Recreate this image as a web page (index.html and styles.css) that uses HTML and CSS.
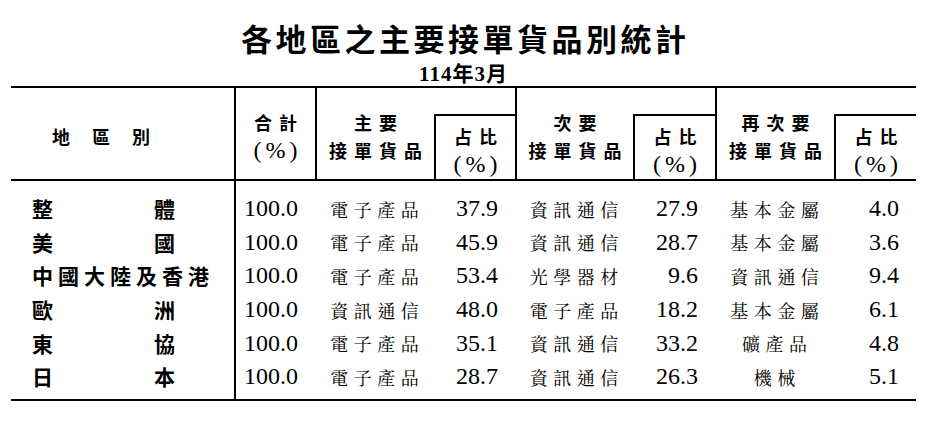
FILE: index.html
```html
<!DOCTYPE html>
<html lang="zh-Hant">
<head>
<meta charset="utf-8">
<title>各地區之主要接單貨品別統計</title>
<link rel="stylesheet" href="styles.css">
</head>
<body>
<div class="report">
  <h1 class="title"><span class="ls">各地區之主要接單貨品別統計</span></h1>
  <div class="period">114年3月</div>
  <div class="table">
    <div class="thead">
      <div class="h h-region">地區別</div>
      <div class="h h-total line"><span class="ls">合計</span><span class="pc">(%)</span></div>
      <div class="h h-main line"><span class="ls">主要</span><span class="ls">接單貨品</span></div>
      <div class="h h-pct1 line top"><span class="ls">占比</span><span class="pc">(%)</span></div>
      <div class="h h-second line"><span class="ls">次要</span><span class="ls">接單貨品</span></div>
      <div class="h h-pct2 line top"><span class="ls">占比</span><span class="pc">(%)</span></div>
      <div class="h h-third line"><span class="ls">再次要</span><span class="ls">接單貨品</span></div>
      <div class="h h-pct3 line top"><span class="ls">占比</span><span class="pc">(%)</span></div>
    </div>
    <div class="tbody">
      <div class="regions">
        <div class="region pair"><span>整</span><span>體</span></div>
        <div class="region pair"><span>美</span><span>國</span></div>
        <div class="region long">中國大陸及香港</div>
        <div class="region pair"><span>歐</span><span>洲</span></div>
        <div class="region pair"><span>東</span><span>協</span></div>
        <div class="region pair"><span>日</span><span>本</span></div>
      </div>
      <div class="data">
        <div class="num">100.0</div><div class="goods"><span class="ls2">電子產品</span></div><div class="num">37.9</div><div class="goods"><span class="ls2">資訊通信</span></div><div class="num">27.9</div><div class="goods"><span class="ls2">基本金屬</span></div><div class="num">4.0</div>
        <div class="num">100.0</div><div class="goods"><span class="ls2">電子產品</span></div><div class="num">45.9</div><div class="goods"><span class="ls2">資訊通信</span></div><div class="num">28.7</div><div class="goods"><span class="ls2">基本金屬</span></div><div class="num">3.6</div>
        <div class="num">100.0</div><div class="goods"><span class="ls2">電子產品</span></div><div class="num">53.4</div><div class="goods"><span class="ls2">光學器材</span></div><div class="num">9.6</div><div class="goods"><span class="ls2">資訊通信</span></div><div class="num">9.4</div>
        <div class="num">100.0</div><div class="goods"><span class="ls2">資訊通信</span></div><div class="num">48.0</div><div class="goods"><span class="ls2">電子產品</span></div><div class="num">18.2</div><div class="goods"><span class="ls2">基本金屬</span></div><div class="num">6.1</div>
        <div class="num">100.0</div><div class="goods"><span class="ls2">電子產品</span></div><div class="num">35.1</div><div class="goods"><span class="ls2">資訊通信</span></div><div class="num">33.2</div><div class="goods"><span class="ls2">礦產品</span></div><div class="num">4.8</div>
        <div class="num">100.0</div><div class="goods"><span class="ls2">電子產品</span></div><div class="num">28.7</div><div class="goods"><span class="ls2">資訊通信</span></div><div class="num">26.3</div><div class="goods"><span class="ls2">機械</span></div><div class="num">5.1</div>
      </div>
    </div>
  </div>
</div>
</body>
</html>
```

FILE: styles.css
```css
html, body {
  margin: 0;
  padding: 0;
  background: #ffffff;
  color: #000000;
}

.report {
  width: 905px;
  margin-left: 11px;
  padding-top: 18px;
  font-family: "Noto Sans CJK TC", sans-serif;
}

.title {
  margin: 0;
  height: 40px;
  line-height: 40px;
  font-size: 31px;
  font-weight: 700;
  text-align: center;
}

.title .ls {
  letter-spacing: 3.5px;
  padding-left: 3.5px;
}

.period {
  margin-top: 4px;
  height: 24px;
  line-height: 24px;
  font-family: "Liberation Serif", "Noto Sans CJK TC", serif;
  font-weight: 700;
  font-size: 21px;
  letter-spacing: 1px;
  text-align: center;
}

.table {
  width: 905px;
}

.thead {
  display: grid;
  grid-template-columns: 223px 81px 119px 81px 118px 82px 119px 82px;
  grid-template-rows: 26px 65px;
  border-top: 2px solid #000;
  border-bottom: 2px solid #000;
  box-sizing: border-box;
}

.h {
  box-sizing: border-box;
  font-weight: 700;
  font-size: 18px;
  display: flex;
  flex-direction: column;
  justify-content: center;
  align-items: center;
  line-height: 28px;
  white-space: nowrap;
}

.h .ls {
  letter-spacing: 7px;
  padding-left: 7px;
}

.h .pc {
  font-family: "Liberation Serif", serif;
  font-size: 24px;
  font-weight: 400;
  letter-spacing: 4px;
  padding-left: 4px;
}

.line {
  border-left: 2px solid #000;
}

.top {
  border-top: 2px solid #000;
}

.h-region {
  grid-column: 1;
  grid-row: 1 / 3;
  align-items: flex-start;
  padding-left: 41px;
  padding-top: 5px;
  letter-spacing: 22px;
}

.h-total { grid-column: 2; grid-row: 1 / 3; padding-top: 5px; }
.h-main { grid-column: 3; grid-row: 1 / 3; padding-top: 5px; }
.h-pct1 { grid-column: 4; grid-row: 2; padding-top: 4px; }
.h-second { grid-column: 5; grid-row: 1 / 3; padding-top: 5px; }
.h-pct2 { grid-column: 6; grid-row: 2; padding-top: 4px; }
.h-third { grid-column: 7; grid-row: 1 / 3; padding-top: 5px; }
.h-pct3 { grid-column: 8; grid-row: 2; padding-top: 4px; }

.tbody {
  display: grid;
  grid-template-columns: 223px 1fr;
  border-bottom: 2px solid #000;
}

.regions {
  display: grid;
  grid-auto-rows: 33.6px;
  padding: 11px 0 5px 21px;
}

.region {
  display: flex;
  align-items: center;
  font-weight: 700;
  font-size: 21px;
  line-height: 1;
}

.pair {
  width: 143px;
  justify-content: space-between;
}

.long {
  letter-spacing: 5px;
}

.data {
  border-left: 2px solid #000;
  display: grid;
  grid-template-columns: 79px 119px 81px 118px 82px 119px 82px;
  grid-auto-rows: 33.6px;
  padding: 11px 0 5px 0;
}

.num {
  display: flex;
  align-items: center;
  justify-content: flex-end;
  padding-right: 17px;
  font-family: "Liberation Serif", serif;
  font-size: 24px;
}

.goods {
  display: flex;
  align-items: center;
  justify-content: center;
  font-family: "Noto Serif CJK TC", "Noto Sans CJK TC", serif;
  font-size: 18px;
  font-weight: 400;
}

.ls2 {
  letter-spacing: 5.5px;
  padding-left: 5.5px;
}
```
